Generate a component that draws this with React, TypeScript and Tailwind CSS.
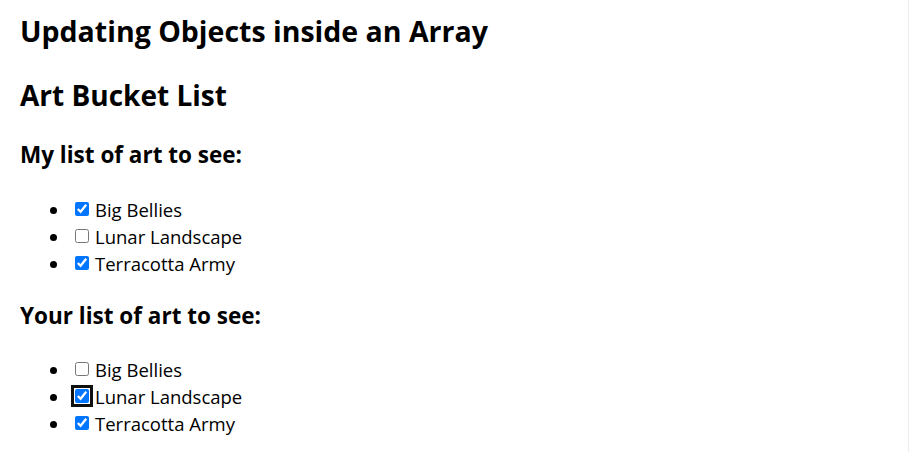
import React from "react";

type Art = { id: number; title: string; seen: boolean };

const MY_LIST: Art[] = [
  { id: 0, title: "Big Bellies", seen: true },
  { id: 1, title: "Lunar Landscape", seen: false },
  { id: 2, title: "Terracotta Army", seen: true },
];

const YOUR_LIST: Art[] = [
  { id: 0, title: "Big Bellies", seen: false },
  { id: 1, title: "Lunar Landscape", seen: true },
  { id: 2, title: "Terracotta Army", seen: true },
];

function ItemList({ artworks, focusId }: { artworks: Art[]; focusId?: number }) {
  return (
    <ul className="list-disc pl-[50px] text-[18.5px] leading-[27px]">
      {artworks.map((art) => (
        <li key={art.id}>
          <label>
            <input
              type="checkbox"
              defaultChecked={art.seen}
              className={
                "ml-[5px] mr-[6px] h-[14px] w-[14px] align-[1px] accent-[#0075ff] " +
                (art.id === focusId ? "rounded-[2px] outline-[3px] outline-offset-[1px] outline-[#101010]" : "")
              }
            />
            {art.title}
          </label>
        </li>
      ))}
    </ul>
  );
}

export default function App() {
  return (
    <div
      className="min-h-screen border-r border-[#ececec] bg-white px-5 pt-[11px] text-black"
      style={{ fontFamily: '"Open Sans", "Noto Sans", sans-serif' }}
    >
      <h1 className="text-[28.5px] font-bold leading-[40px]">Updating Objects inside an Array</h1>
      <h2 className="mt-[27px] text-[28px] font-bold leading-[34px]">Art Bucket List</h2>
      <h3 className="mt-[28px] text-[22.5px] font-bold leading-[30px]">My list of art to see:</h3>
      <div className="mt-[26px]">
        <ItemList artworks={MY_LIST} />
      </div>
      <h3 className="mt-[24px] text-[22.5px] font-bold leading-[30px]">Your list of art to see:</h3>
      <div className="mt-[25px]">
        <ItemList artworks={YOUR_LIST} focusId={1} />
      </div>
    </div>
  );
}
